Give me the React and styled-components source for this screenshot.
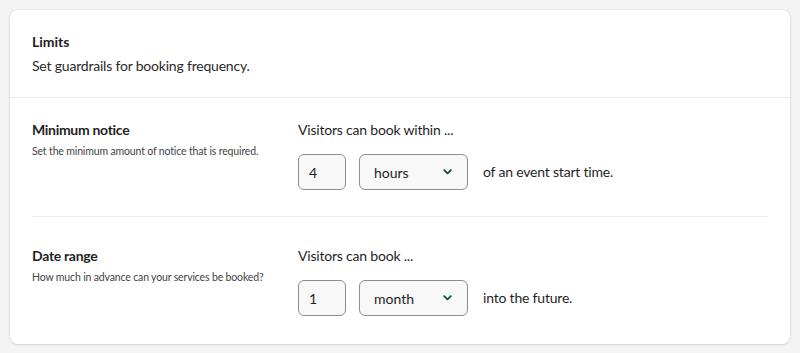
import React, { useState } from "react";
import styled, { createGlobalStyle } from "styled-components";

const GlobalStyle = createGlobalStyle`
  html, body {
    margin: 0;
    padding: 0;
    background: #f4f4f4;
    font-family: Lato, "Liberation Sans", sans-serif;
    color: #1f1f1f;
  }
`;

const limits = [
  {
    key: "notice",
    title: "Minimum notice",
    desc: "Set the minimum amount of notice that is required.",
    lead: "Visitors can book within ...",
    amount: "4",
    unit: "hours",
    units: ["minutes", "hours", "days"],
    tail: "of an event start time.",
  },
  {
    key: "range",
    title: "Date range",
    desc: "How much in advance can your services be booked?",
    lead: "Visitors can book ...",
    amount: "1",
    unit: "month",
    units: ["day", "week", "month"],
    tail: "into the future.",
  },
];

function Chevron() {
  return (
    <svg width="9" height="6" viewBox="0 0 9 6" fill="none">
      <path
        d="M1.2 1.2 L4.5 4.4 L7.8 1.2"
        stroke="#1c4a47"
        strokeWidth="1.8"
        strokeLinecap="round"
        strokeLinejoin="round"
      />
    </svg>
  );
}

function LimitRow({ item, last }) {
  const [amount, setAmount] = useState(item.amount);
  const [unit, setUnit] = useState(item.unit);

  return (
    <Row $last={last}>
      <Label>
        <RowTitle>{item.title}</RowTitle>
        <RowDesc>{item.desc}</RowDesc>
      </Label>
      <Controls>
        <Lead>{item.lead}</Lead>
        <Fields>
          <AmountInput
            type="text"
            value={amount}
            onChange={(e) => setAmount(e.target.value)}
          />
          <SelectWrap>
            <UnitSelect value={unit} onChange={(e) => setUnit(e.target.value)}>
              {item.units.map((u) => (
                <option key={u} value={u}>
                  {u}
                </option>
              ))}
            </UnitSelect>
            <ChevronSpot>
              <Chevron />
            </ChevronSpot>
          </SelectWrap>
          <Tail>{item.tail}</Tail>
        </Fields>
      </Controls>
    </Row>
  );
}

export default function App() {
  return (
    <Page>
      <GlobalStyle />
      <Card>
        <Header>
          <Title>Limits</Title>
          <Subtitle>Set guardrails for booking frequency.</Subtitle>
        </Header>
        <Body>
          {limits.map((item, i) => (
            <LimitRow key={item.key} item={item} last={i === limits.length - 1} />
          ))}
        </Body>
      </Card>
    </Page>
  );
}

const Page = styled.div`
  padding: 10px 10px 9px 10px;
`;

const Card = styled.div`
  background: #fff;
  border-radius: 8px;
  box-shadow: 0 0 0 1px rgba(0, 0, 0, 0.04), 0 1px 3px rgba(0, 0, 0, 0.1);
  overflow: hidden;
`;

const Header = styled.div`
  padding: 22px 22px 22px;
  border-bottom: 1px solid #ececec;
  height: 43px;
`;

const Title = styled.h2`
  margin: 0;
  font-size: 14px;
  font-weight: 700;
  line-height: 20px;
`;

const Subtitle = styled.p`
  margin: 4px 0 0;
  font-size: 14px;
  letter-spacing: -0.2px;
  line-height: 20px;
  color: #2a2a2a;
`;

const Body = styled.div`
  padding: 0 22px;
`;

const Row = styled.div`
  display: grid;
  grid-template-columns: 266px 1fr;
  padding: ${(p) => (p.$last ? "29px 0 28px" : "22px 0 26px")};
  border-bottom: ${(p) => (p.$last ? "none" : "1px solid #ececec")};
`;

const Label = styled.div`
  display: flex;
  flex-direction: column;
`;

const RowTitle = styled.h3`
  margin: 0;
  font-size: 14px;
  letter-spacing: -0.3px;
  font-weight: 700;
  line-height: 20px;
`;

const RowDesc = styled.p`
  margin: 3px 0 0;
  font-size: 10.5px;
  letter-spacing: -0.15px;
  line-height: 16px;
  color: #444;
`;

const Controls = styled.div`
  display: flex;
  flex-direction: column;
  gap: 14px;
`;

const Lead = styled.p`
  margin: 0;
  font-size: 14px;
  letter-spacing: -0.2px;
  line-height: 20px;
`;

const Fields = styled.div`
  display: flex;
  align-items: center;
`;

const AmountInput = styled.input`
  box-sizing: border-box;
  width: 48px;
  height: 36px;
  padding: 0 10px;
  border: 1px solid #8e8e8e;
  border-radius: 6px;
  background: #f8f8f8;
  font-family: inherit;
  font-size: 14px;
  color: #1f1f1f;
  margin-right: 13px;
  outline: none;
`;

const SelectWrap = styled.div`
  position: relative;
  width: 109px;
  height: 36px;
  margin-right: 15px;
`;

const UnitSelect = styled.select`
  appearance: none;
  box-sizing: border-box;
  width: 100%;
  height: 100%;
  padding: 0 30px 0 14px;
  border: 1px solid #8e8e8e;
  border-radius: 6px;
  background: #f8f8f8;
  font-family: inherit;
  font-size: 14px;
  color: #1f1f1f;
  outline: none;
`;

const ChevronSpot = styled.span`
  position: absolute;
  right: 16px;
  top: 15px;
  display: flex;
  pointer-events: none;
`;

const Tail = styled.span`
  font-size: 14px;
  letter-spacing: -0.2px;
  line-height: 20px;
`;
